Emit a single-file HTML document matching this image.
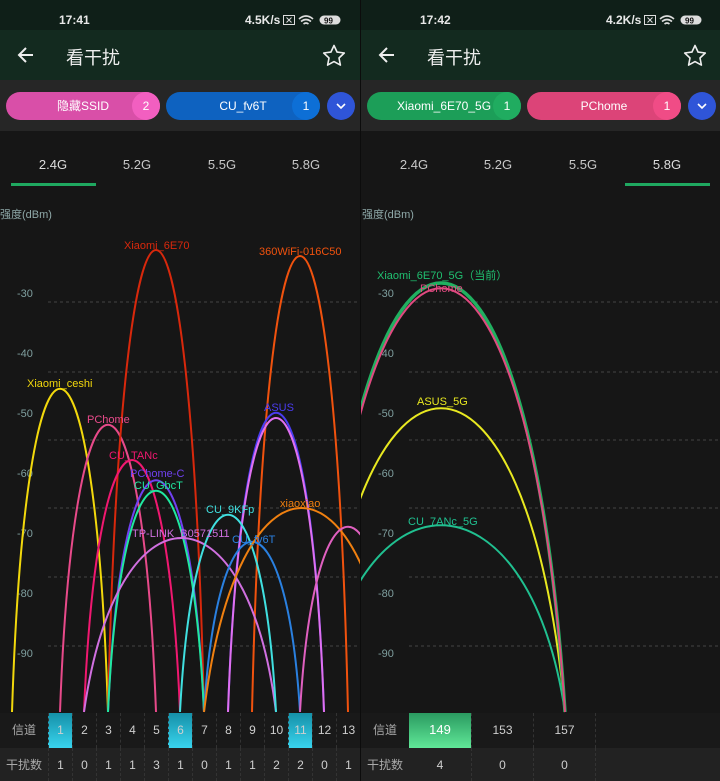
<!DOCTYPE html>
<html><head><meta charset="utf-8"><style>
*{margin:0;padding:0;box-sizing:border-box}
body{width:720px;height:781px;background:#161616;font-family:"Liberation Sans","Noto Sans CJK SC",sans-serif;overflow:hidden;position:relative}
.p{position:absolute;top:0;width:360px;height:781px;overflow:hidden;background:#161616}
.sb{position:absolute;top:0;left:0;width:360px;height:30px;background:#0f1f18;color:#e8e8e8;font-size:12px;font-weight:bold}
.tb{position:absolute;top:30px;left:0;width:360px;height:50px;background:#132a1f;color:#eee}
.cb{position:absolute;top:80px;left:0;width:360px;height:51px;background:#262626}
.chip{position:absolute;top:12px;height:28px;border-radius:14px;color:#fff;font-size:12px;line-height:28px;text-align:center}
.chip .n{position:absolute;right:0;top:0;width:28px;height:28px;border-radius:14px;text-align:center}
.dd{position:absolute;top:12px;left:327px;width:28px;height:28px;border-radius:14px;background:#2f55d8}
.tabs{position:absolute;top:131px;left:0;width:360px;height:56px;color:#c8c8c8;font-size:13px}
.tabs span{position:absolute;top:26px;transform:translateX(-50%)}
.ul{position:absolute;top:183px;height:3px;width:85px;background:#1fa860}
.t1,.t2{position:absolute;left:0;width:360px;font-size:12px;color:#cfcfcf}
.t1{top:713px;height:35px;background:#191919}
.t2{top:748px;height:33px;background:#222}
.c{position:absolute;top:0;height:100%;text-align:center;line-height:34px;border-left:1px dashed #333}
svg text{font-family:"Liberation Sans","Noto Sans CJK SC",sans-serif;font-size:11px}
</style></head><body>

<!-- LEFT PANEL -->
<div class="p" style="left:0">
<div class="sb"><span style="position:absolute;left:59px;top:13px">17:41</span><span style="position:absolute;left:245px;top:13px">4.5K/s</span>
<svg style="position:absolute;left:283px;top:14px" width="60" height="12"><rect x="0.5" y="1.5" width="11" height="9" fill="none" stroke="#ddd"/><path d="M3.5 3.5l5 5M8.5 3.5l-5 5" stroke="#ddd"/><path d="M16 5q7-6 14 0M18 7.5q5-4 10 0M20.5 10q2.5-2 5 0" stroke="#ddd" stroke-width="1.6" fill="none"/><rect x="36.5" y="1.5" width="21" height="9" rx="4.5" fill="#ddd"/><text x="41" y="9.5" style="font-size:8px" fill="#111">99</text></svg></div>
<div class="tb"><svg style="position:absolute;left:17px;top:16px" width="18" height="18"><path d="M16 9H3M9 2L2 9l7 7" stroke="#eee" stroke-width="2" fill="none"/></svg>
<span style="position:absolute;left:66px;top:14px;font-size:18px">看干扰</span>
<svg style="position:absolute;left:322px;top:14px" width="24" height="24"><path d="M12 1.5l3.1 6.6 7.2.9-5.3 5 1.4 7.1L12 17.6l-6.4 3.5 1.4-7.1-5.3-5 7.2-.9z" stroke="#eee" stroke-width="1.6" fill="none" stroke-linejoin="round"/></svg></div>
<div class="cb">
<div class="chip" style="left:6px;width:154px;background:#d94fa8">隐藏SSID<div class="n" style="background:#f25fc0">2</div></div>
<div class="chip" style="left:166px;width:154px;background:#0e62c0">CU_fv6T<div class="n" style="background:#0d6fd6">1</div></div>
<div class="dd"><svg width="28" height="28"><path d="M10 12l4 4 4-4" stroke="#fff" stroke-width="1.6" fill="none"/></svg></div></div>
<div class="tabs"><span style="left:53px;color:#ddd">2.4G</span><span style="left:137px">5.2G</span><span style="left:222px">5.5G</span><span style="left:306px">5.8G</span></div>
<div class="ul" style="left:11px"></div>
<svg style="position:absolute;left:0;top:0" width="360" height="713">
<text x="0" y="218" fill="#8fa9a9">强度(dBm)</text>
<g fill="#7f9f9f"><text x="17" y="297">-30</text><text x="17" y="357">-40</text><text x="17" y="417">-50</text><text x="17" y="477">-60</text><text x="17" y="537">-70</text><text x="17" y="597">-80</text><text x="17" y="657">-90</text></g>
<g stroke="#444" stroke-dasharray="3 3"><path d="M48 302H360M48 372H360M48 440H360M48 508H360M48 577H360M48 646H360"/></g>
<g fill="none" stroke-width="2">
<path d="M12,712 C26,281 94,281 108,712" stroke="#f2d80c"/>
<path d="M60,712 C74,329 142,329 156,712" stroke="#e84a8a"/>
<path d="M108,712 C122,96 190,96 204,712" stroke="#d8280c"/>
<path d="M252,712 C266,104 334,104 348,712" stroke="#f0520e"/>
<path d="M228,712 C242,313 310,313 324,712" stroke="#4a3cf0"/>
<path d="M228,712 C242,320 310,320 324,712" stroke="#e070f0"/>
<path d="M84,712 C98,376 166,376 180,712" stroke="#f01870"/>
<path d="M108,712 C122,403 190,403 204,712" stroke="#7040f0"/>
<path d="M108,712 C122,417 190,417 204,712" stroke="#20e8a0"/>
<path d="M84,712 C117,480 247,480 276,712" stroke="#d070e0"/>
<path d="M180,712 C194,449 262,449 276,712" stroke="#40e0e0"/>
<path d="M204,712 C218,485 286,485 300,712" stroke="#2a80e0"/>
<path d="M204,712 C237,440 367,440 396,712" stroke="#f08010"/>
<path d="M300,712 C314,465 382,465 396,712" stroke="#e060c0"/>
</g>
<text x="124" y="249" fill="#d8280c">Xiaomi_6E70</text>
<text x="259" y="255" fill="#f0520e">360WiFi-016C50</text>
<text x="27" y="387" fill="#f2d80c">Xiaomi_ceshi</text>
<text x="87" y="423" fill="#e84a8a">PChome</text>
<text x="264" y="411" fill="#4a3cf0">ASUS</text>
<text x="109" y="459" fill="#f01870">CU_TANc</text>
<text x="130" y="477" fill="#7040f0">PChome-C</text>
<text x="134" y="489" fill="#20e8a0">CU_GbcT</text>
<text x="132" y="537" fill="#d070e0">TP-LINK_B0571511</text>
<text x="206" y="513" fill="#40e0e0">CU_9KFp</text>
<text x="232" y="543" fill="#2a80e0">CU_fv6T</text>
<text x="280" y="507" fill="#f08010">xiaoxiao</text>
</svg>
<div class="t1"><div class="c" style="left:0;width:48px;border:0;color:#aaa">信道</div>
<div class="c" style="left:48px;width:24px;background:linear-gradient(#1590a8,#38d4ee)">1</div><div class="c" style="left:72px;width:24px">2</div><div class="c" style="left:96px;width:24px">3</div><div class="c" style="left:120px;width:24px">4</div><div class="c" style="left:144px;width:24px">5</div><div class="c" style="left:168px;width:24px;background:linear-gradient(#1590a8,#38d4ee)">6</div><div class="c" style="left:192px;width:24px">7</div><div class="c" style="left:216px;width:24px">8</div><div class="c" style="left:240px;width:24px">9</div><div class="c" style="left:264px;width:24px">10</div><div class="c" style="left:288px;width:24px;background:linear-gradient(#1590a8,#38d4ee)">11</div><div class="c" style="left:312px;width:24px">12</div><div class="c" style="left:336px;width:24px">13</div></div>
<div class="t2"><div class="c" style="left:0;width:48px;border:0;color:#aaa">干扰数</div>
<div class="c" style="left:48px;width:24px">1</div><div class="c" style="left:72px;width:24px">0</div><div class="c" style="left:96px;width:24px">1</div><div class="c" style="left:120px;width:24px">1</div><div class="c" style="left:144px;width:24px">3</div><div class="c" style="left:168px;width:24px">1</div><div class="c" style="left:192px;width:24px">0</div><div class="c" style="left:216px;width:24px">1</div><div class="c" style="left:240px;width:24px">1</div><div class="c" style="left:264px;width:24px">2</div><div class="c" style="left:288px;width:24px">2</div><div class="c" style="left:312px;width:24px">0</div><div class="c" style="left:336px;width:24px">1</div></div>
</div>

<!-- RIGHT PANEL -->
<div class="p" style="left:360px;border-left:1px solid #0c0c0c">
<div class="sb"><span style="position:absolute;left:59px;top:13px">17:42</span><span style="position:absolute;left:245px;top:13px">4.2K/s</span>
<svg style="position:absolute;left:283px;top:14px" width="60" height="12"><rect x="0.5" y="1.5" width="11" height="9" fill="none" stroke="#ddd"/><path d="M3.5 3.5l5 5M8.5 3.5l-5 5" stroke="#ddd"/><path d="M16 5q7-6 14 0M18 7.5q5-4 10 0M20.5 10q2.5-2 5 0" stroke="#ddd" stroke-width="1.6" fill="none"/><rect x="36.5" y="1.5" width="21" height="9" rx="4.5" fill="#ddd"/><text x="41" y="9.5" style="font-size:8px" fill="#111">99</text></svg></div>
<div class="tb"><svg style="position:absolute;left:17px;top:16px" width="18" height="18"><path d="M16 9H3M9 2L2 9l7 7" stroke="#eee" stroke-width="2" fill="none"/></svg>
<span style="position:absolute;left:66px;top:14px;font-size:18px">看干扰</span>
<svg style="position:absolute;left:322px;top:14px" width="24" height="24"><path d="M12 1.5l3.1 6.6 7.2.9-5.3 5 1.4 7.1L12 17.6l-6.4 3.5 1.4-7.1-5.3-5 7.2-.9z" stroke="#eee" stroke-width="1.6" fill="none" stroke-linejoin="round"/></svg></div>
<div class="cb">
<div class="chip" style="left:6px;width:154px;background:#1c9e58">Xiaomi_6E70_5G<div class="n" style="background:#20ac60">1</div></div>
<div class="chip" style="left:166px;width:154px;background:#dc4478">PChome<div class="n" style="background:#f04c86">1</div></div>
<div class="dd"><svg width="28" height="28"><path d="M10 12l4 4 4-4" stroke="#fff" stroke-width="1.6" fill="none"/></svg></div></div>
<div class="tabs"><span style="left:53px">2.4G</span><span style="left:137px">5.2G</span><span style="left:222px">5.5G</span><span style="left:306px;color:#ddd">5.8G</span></div>
<div class="ul" style="left:264px"></div>
<svg style="position:absolute;left:0;top:0" width="360" height="713">
<text x="1" y="218" fill="#8fa9a9">强度(dBm)</text>
<g fill="#7f9f9f"><text x="17" y="297">-30</text><text x="17" y="357">-40</text><text x="17" y="417">-50</text><text x="17" y="477">-60</text><text x="17" y="537">-70</text><text x="17" y="597">-80</text><text x="17" y="657">-90</text></g>
<g stroke="#444" stroke-dasharray="3 3"><path d="M48 302H360M48 372H360M48 440H360M48 508H360M48 577H360M48 646H360"/></g>
<g fill="none" stroke-width="2">
<path d="M-44,712 C-7,463 167,463 204,712" stroke="#20c090"/>
<path d="M-44,712 C-7,307 167,307 204,712" stroke="#e8e820"/>
<path d="M-44,712 C-7,140 167,140 204,712" stroke="#20b060" stroke-width="3.5"/>
<path d="M-44,712 C-7,147 167,147 204,712" stroke="#e04a80"/>
</g>
<text x="16" y="279" fill="#20c070">Xiaomi_6E70_5G（当前）</text>
<text x="59" y="292" fill="#e04a80">PChome</text>
<text x="56" y="405" fill="#e8e820">ASUS_5G</text>
<text x="47" y="525" fill="#20c090">CU_7ANc_5G</text>
</svg>
<div class="t1"><div class="c" style="left:0;width:48px;border:0;color:#aaa">信道</div>
<div class="c" style="left:48px;width:62px;border:0;background:linear-gradient(#2a9a60,#60e898);color:#fff;font-size:13px">149</div><div class="c" style="left:110px;width:62px">153</div><div class="c" style="left:172px;width:62px">157</div><div class="c" style="left:234px;width:126px"></div></div>
<div class="t2"><div class="c" style="left:0;width:48px;border:0;color:#aaa">干扰数</div>
<div class="c" style="left:48px;width:62px;border:0">4</div><div class="c" style="left:110px;width:62px">0</div><div class="c" style="left:172px;width:62px">0</div><div class="c" style="left:234px;width:126px"></div></div>
</div>
</body></html>
